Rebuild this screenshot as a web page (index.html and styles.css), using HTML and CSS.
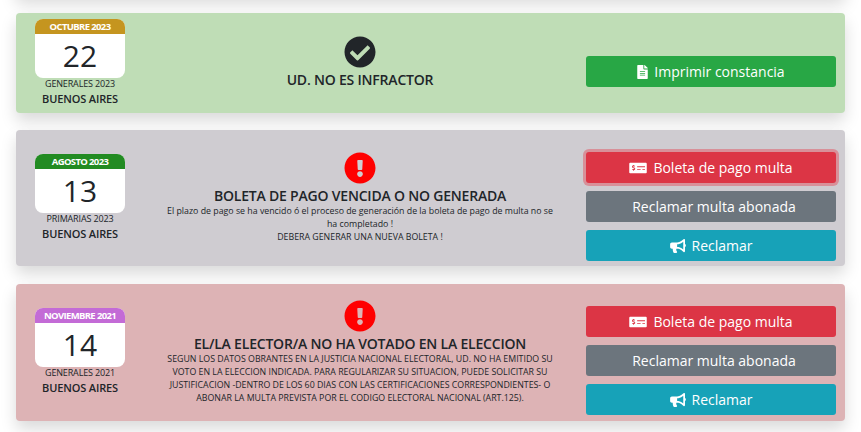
FILE: index.html
```html
<!DOCTYPE html>
<html lang="es">
<head>
<meta charset="utf-8">
<title>Infracciones</title>
<link rel="stylesheet" href="styles.css">
</head>
<body>
<svg class="defs" width="0" height="0" aria-hidden="true">
  <symbol id="i-check" viewBox="0 0 512 512"><path d="M504 256c0 136.967-111.033 248-248 248S8 392.967 8 256 119.033 8 256 8s248 111.033 248 248zM227.314 387.314l184-184c6.248-6.248 6.248-16.379 0-22.627l-22.627-22.627c-6.248-6.249-16.379-6.249-22.628 0L216 308.118l-70.059-70.059c-6.248-6.248-16.379-6.248-22.628 0l-22.627 22.627c-6.248 6.248-6.248 16.379 0 22.627l104 104c6.249 6.249 16.379 6.249 22.628.001z"/></symbol>
  <symbol id="i-excl" viewBox="0 0 512 512"><path d="M504 256c0 136.997-111.043 248-248 248S8 392.997 8 256C8 119.083 119.043 8 256 8s248 111.083 248 248zm-248 50c-25.405 0-46 20.595-46 46s20.595 46 46 46 46-20.595 46-46-20.595-46-46-46zm-43.673-165.346l7.418 136c.347 6.364 5.609 11.346 11.982 11.346h48.546c6.373 0 11.635-4.982 11.982-11.346l7.418-136c.375-6.874-5.098-12.654-11.982-12.654h-63.383c-6.884 0-12.356 5.78-11.981 12.654z"/></symbol>
  <symbol id="i-file" viewBox="0 0 384 512"><path d="M224 136V0H24C10.7 0 0 10.7 0 24v464c0 13.3 10.7 24 24 24h336c13.3 0 24-10.7 24-24V160H248c-13.2 0-24-10.8-24-24zm64 236c0 6.6-5.4 12-12 12H108c-6.6 0-12-5.4-12-12v-8c0-6.6 5.4-12 12-12h168c6.6 0 12 5.4 12 12v8zm0-64c0 6.6-5.4 12-12 12H108c-6.6 0-12-5.4-12-12v-8c0-6.6 5.4-12 12-12h168c6.6 0 12 5.4 12 12v8zm0-72v8c0 6.6-5.4 12-12 12H108c-6.6 0-12-5.4-12-12v-8c0-6.6 5.4-12 12-12h168c6.6 0 12 5.4 12 12zm96-114.1v6.1H256V0h6.1c6.4 0 12.5 2.5 17 7l97.9 98c4.5 4.5 7 10.6 7 16.9z"/></symbol>
  <symbol id="i-money" viewBox="0 0 640 512"><path d="M608 64H32C14.33 64 0 78.33 0 96v320c0 17.67 14.33 32 32 32h576c17.67 0 32-14.33 32-32V96c0-17.67-14.33-32-32-32zM176 327.88V344c0 4.42-3.58 8-8 8h-16c-4.42 0-8-3.58-8-8v-16.29c-11.29-.58-22.27-4.52-31.37-11.35-3.9-2.93-4.1-8.77-.57-12.14l11.75-11.21c2.77-2.64 6.89-2.76 10.13-.73 3.87 2.42 8.26 3.72 12.82 3.72h28.11c6.5 0 11.8-5.92 11.8-13.19 0-5.95-3.61-11.19-8.77-12.73l-45-13.5c-18.59-5.58-31.58-23.42-31.58-43.39 0-24.52 19.05-44.44 42.67-45.07V152c0-4.42 3.58-8 8-8h16c4.42 0 8 3.58 8 8v16.29c11.29.58 22.27 4.51 31.37 11.35 3.9 2.93 4.1 8.77.57 12.14l-11.75 11.21c-2.77 2.64-6.89 2.76-10.13.73-3.87-2.43-8.26-3.72-12.82-3.72h-28.11c-6.5 0-11.8 5.92-11.8 13.19 0 5.95 3.61 11.19 8.77 12.73l45 13.5c18.59 5.58 31.58 23.42 31.58 43.39 0 24.53-19.05 44.44-42.67 45.07zM416 312c0 4.42-3.58 8-8 8H296c-4.42 0-8-3.58-8-8v-16c0-4.42 3.58-8 8-8h112c4.42 0 8 3.58 8 8v16zm160 0c0 4.42-3.58 8-8 8h-80c-4.42 0-8-3.58-8-8v-16c0-4.42 3.58-8 8-8h80c4.42 0 8 3.58 8 8v16zm0-96c0 4.42-3.58 8-8 8H296c-4.42 0-8-3.58-8-8v-16c0-4.42 3.58-8 8-8h272c4.42 0 8 3.58 8 8v16z"/></symbol>
  <symbol id="i-horn" viewBox="0 0 576 512"><path d="M576 240c0-23.63-12.95-44.04-32-55.12V32.01C544 23.26 537.02 0 512 0c-7.12 0-14.19 2.38-19.98 7.02l-85.03 68.03C364.28 109.19 310.66 128 256 128H64c-35.35 0-64 28.65-64 64v96c0 35.35 28.65 64 64 64h33.7c-1.39 10.48-2.18 21.14-2.18 32 0 39.77 9.26 77.35 25.56 110.94 5.19 10.69 16.52 17.06 28.4 17.06h74.28c26.05 0 41.69-29.84 25.9-50.56-16.4-21.52-26.15-48.36-26.15-77.44 0-11.11 1.62-21.79 4.41-32H256c54.66 0 108.28 18.81 150.98 52.95l85.03 68.03a32.023 32.023 0 0 0 19.98 7.02c24.92 0 32-22.78 32-32V295.13C563.05 284.04 576 263.63 576 240zm-96 141.42l-33.05-26.44C392.95 311.78 325.12 288 256 288v-96c69.12 0 136.95-23.78 190.95-66.98L480 98.58v282.84z"/></symbol>
</svg>
<main class="list">
  <div class="previous"></div>

  <section class="card card-ok">
    <div class="when">
      <div class="cal">
        <div class="cal-month month-gold">OCTUBRE 2023</div>
        <div class="cal-day">22</div>
      </div>
      <div class="when-name">GENERALES 2023</div>
      <div class="when-place">BUENOS AIRES</div>
    </div>
    <div class="info">
      <svg class="status status-dark"><use href="#i-check"/></svg>
      <h2 class="title">UD. NO ES INFRACTOR</h2>
    </div>
    <div class="actions">
      <a class="btn btn-green"><svg class="ico ico-file"><use href="#i-file"/></svg>Imprimir constancia</a>
    </div>
  </section>

  <section class="card card-grey">
    <div class="when">
      <div class="cal">
        <div class="cal-month month-green">AGOSTO 2023</div>
        <div class="cal-day">13</div>
      </div>
      <div class="when-name">PRIMARIAS 2023</div>
      <div class="when-place">BUENOS AIRES</div>
    </div>
    <div class="info">
      <svg class="status status-red"><use href="#i-excl"/></svg>
      <h2 class="title">BOLETA DE PAGO VENCIDA O NO GENERADA</h2>
      <p class="desc">El plazo de pago se ha vencido ó el proceso de generación de la boleta de pago de multa no se ha completado !<br>DEBERA GENERAR UNA NUEVA BOLETA !</p>
    </div>
    <div class="actions">
      <a class="btn btn-red btn-focus"><svg class="ico ico-money"><use href="#i-money"/></svg>Boleta de pago multa</a>
      <a class="btn btn-grey btn-plain">Reclamar multa abonada</a>
      <a class="btn btn-teal"><svg class="ico ico-horn"><use href="#i-horn"/></svg>Reclamar</a>
    </div>
  </section>

  <section class="card card-pink">
    <div class="when">
      <div class="cal">
        <div class="cal-month month-violet">NOVIEMBRE 2021</div>
        <div class="cal-day">14</div>
      </div>
      <div class="when-name">GENERALES 2021</div>
      <div class="when-place">BUENOS AIRES</div>
    </div>
    <div class="info">
      <svg class="status status-red"><use href="#i-excl"/></svg>
      <h2 class="title">EL/LA ELECTOR/A NO HA VOTADO EN LA ELECCION</h2>
      <p class="desc">SEGUN LOS DATOS OBRANTES EN LA JUSTICIA NACIONAL ELECTORAL, UD. NO HA EMITIDO SU VOTO EN LA ELECCION INDICADA. PARA REGULARIZAR SU SITUACION, PUEDE SOLICITAR SU JUSTIFICACION -DENTRO DE LOS 60 DIAS CON LAS CERTIFICACIONES CORRESPONDIENTES- O ABONAR LA MULTA PREVISTA POR EL CODIGO ELECTORAL NACIONAL (ART.125).</p>
    </div>
    <div class="actions">
      <a class="btn btn-red"><svg class="ico ico-money"><use href="#i-money"/></svg>Boleta de pago multa</a>
      <a class="btn btn-grey btn-plain">Reclamar multa abonada</a>
      <a class="btn btn-teal"><svg class="ico ico-horn"><use href="#i-horn"/></svg>Reclamar</a>
    </div>
  </section>
</main>
</body>
</html>
```
FILE: styles.css
```css
* { box-sizing: border-box; }
html, body { margin: 0; height: 100%; overflow: hidden; background: #fff; }
body { font-family: "Open Sans", "DejaVu Sans", sans-serif; color: #212529; }
.defs { display: block; height: 0; }
.list { padding: 0 16px; display: flex; flex-direction: column; }
.previous { height: 20px; margin-top: -24px; margin-bottom: 17px; box-shadow: 0 8px 16px rgba(0,0,0,.15); }
.card {
  display: flex;
  align-items: center;
  border-radius: 4px;
  padding: 5px 9px 5px 0;
  box-shadow: 0 8px 16px rgba(0,0,0,.15);
}
.card-ok { background: #bfddb6; margin-bottom: 17px; }
.card-ok .info { padding-bottom: 2px; }
.card-grey { background: #cfccd1; margin-bottom: 18px; }
.card-pink { background: #ddb3b5; padding-bottom: 6px; }

.when { width: 128px; flex: none; display: flex; flex-direction: column; align-items: center; }
.cal { width: 90px; height: 59px; margin-top: 1px; background: #fff; border-radius: 8px; overflow: hidden; }
.cal-month { height: 15px; line-height: 15px; font-size: 9.5px; font-weight: 700; color: #fff; text-align: center; letter-spacing: -.63px; }
.month-gold { background: #c5951f; }
.month-green { background: #228b22; }
.month-violet { background: #c36bd6; }
.cal-day { font-size: 30px; line-height: 44px; font-weight: 500; text-align: center; }
.when-name { font-size: 9px; line-height: 12px; letter-spacing: -.15px; }
.when-place { font-size: 11px; line-height: 18px; font-weight: 600; letter-spacing: -.15px; }

.info { flex: 1; min-width: 0; padding: 0 16px; display: flex; flex-direction: column; align-items: center; text-align: center; }
.status { width: 32px; height: 32px; display: block; }
.status-dark { fill: #212529; }
.status-red { fill: #f00; }
.title { margin: 3px 0 0; font-size: 14px; line-height: 18px; font-weight: 600; letter-spacing: -.2px; }
.desc { margin: 0; font-size: 8.8px; line-height: 13px; width: 392px; }

.actions { flex: none; width: 250px; margin-left: 10px; padding-top: 17px; display: flex; flex-direction: column; gap: 8px; }
.btn { height: 31px; display: flex; align-items: center; justify-content: center; border-radius: 3px; color: #fff; font-size: 14px; }
.btn-green { background: #28a745; }
.btn-red { background: #dc3545; }
.btn-grey { background: #6c757d; }
.btn-teal { background: #17a2b8; }
.btn-focus { box-shadow: 0 0 0 3px rgba(225,83,97,.5); }
.btn-plain { padding-left: 6px; }
.ico { fill: #fff; display: block; height: 14px; margin-right: 6px; }
.ico-file { width: 11px; }
.ico-money { width: 18px; }
.ico-horn { width: 16px; }
```
